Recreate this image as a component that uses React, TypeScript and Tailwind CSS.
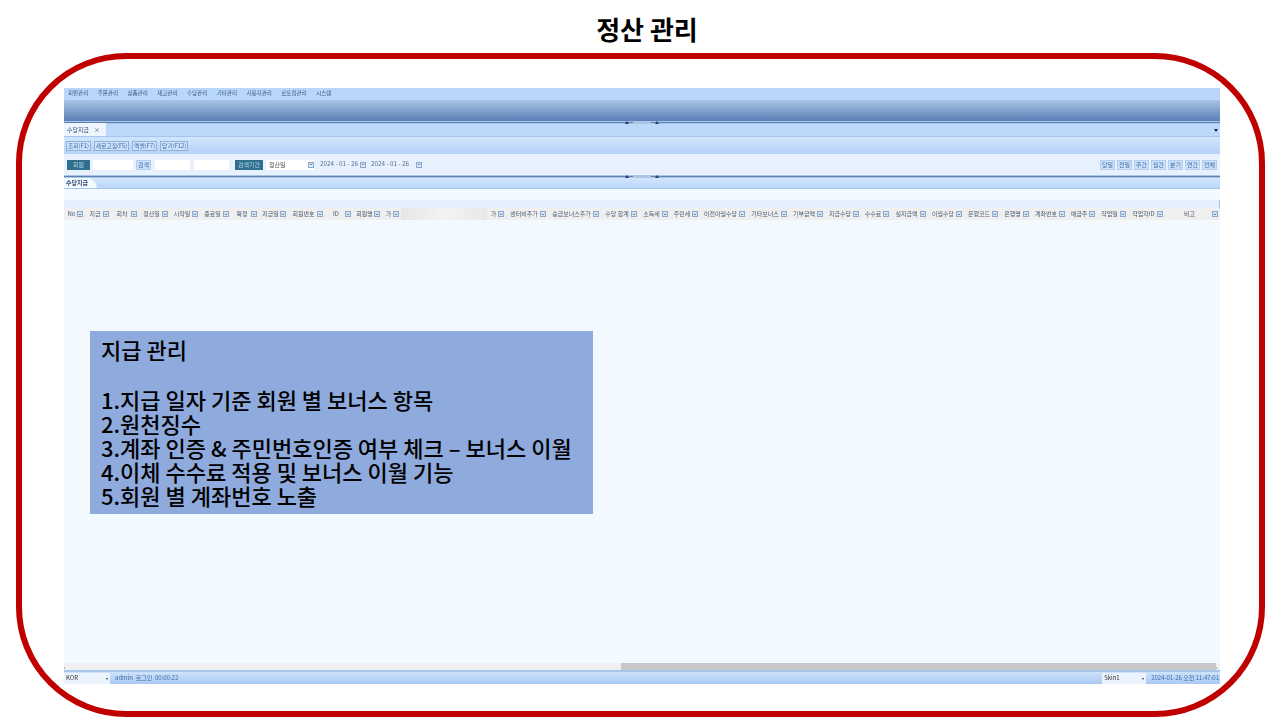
import React from "react";
import { ChevronDown } from "lucide-react";

const cols = [
  { label: "No", w: "w-[21px]" },
  { label: "지급", w: "w-[26px]" },
  { label: "회차", w: "w-[28px]" },
  { label: "정산일", w: "w-[31px]" },
  { label: "시작일", w: "w-[30px]" },
  { label: "종료일", w: "w-[31px]" },
  { label: "확정", w: "w-[28px]" },
  { label: "지급일", w: "w-[29px]" },
  { label: "회원번호", w: "w-[37px]" },
  { label: "ID", w: "w-[28px]" },
  { label: "회원명", w: "w-[29px]" },
  { label: "가", w: "w-[19px]" },
  { label: "", w: "w-[86px]" },
  { label: "가", w: "w-[19px]" },
  { label: "센터비추가", w: "w-[42px]" },
  { label: "승급보너스추가", w: "w-[53px]" },
  { label: "수당 합계", w: "w-[38px]" },
  { label: "소득세", w: "w-[31px]" },
  { label: "주민세", w: "w-[30px]" },
  { label: "이전이월수당", w: "w-[47px]" },
  { label: "기타보너스", w: "w-[42px]" },
  { label: "기부금액", w: "w-[36px]" },
  { label: "지급수당", w: "w-[36px]" },
  { label: "수수료", w: "w-[30px]" },
  { label: "실지급액", w: "w-[37px]" },
  { label: "이월수당", w: "w-[36px]" },
  { label: "은행코드", w: "w-[36px]" },
  { label: "은행명", w: "w-[31px]" },
  { label: "계좌번호", w: "w-[36px]" },
  { label: "예금주", w: "w-[30px]" },
  { label: "작업일", w: "w-[31px]" },
  { label: "작업자ID", w: "w-[37px]" },
  { label: "비고", w: "w-[55px]" },
];

const menus = ["회원관리", "주문관리", "상품관리", "재고관리", "수당관리", "기타관리", "사용자관리", "로또쉽관리", "시스템"];
const actions = ["조회(F1)", "새로고침(F5)", "엑셀(F7)", "닫기(F12)"];
const periods = ["당일", "전일", "주간", "월간", "분기", "연간", "전체"];
const notes = [
  "1.지급 일자 기준 회원 별 보너스 항목",
  "2.원천징수",
  "3.계좌 인증 & 주민번호인증 여부 체크 – 보너스 이월",
  "4.이체 수수료 적용 및 보너스 이월 기능",
  "5.회원 별 계좌번호 노출",
];

function Arrow() {
  return <span className="flex h-[6px] w-[6px] shrink-0 items-center justify-center border border-[#8aa9d0] bg-[#dbe8f8]"><ChevronDown size={5} strokeWidth={4} className="text-[#33507a]" /></span>;
}

function Splitter() {
  return (
    <div className="flex h-[3px] items-center justify-center bg-[#a9c6ea]">
      <div className="relative flex h-[3px] w-full items-center justify-center gap-[4px]">
        <span className="absolute inset-x-0 top-[1px] h-[1px] bg-[#5f7fae]" />
        <span className="relative h-0 w-0 border-x-[2px] border-b-[3px] border-x-transparent border-b-[#1f3f70]" />
        <span className="relative h-[1px] w-[18px] bg-[#b7c4d8]" />
        <span className="relative h-0 w-0 border-x-[2px] border-b-[3px] border-x-transparent border-b-[#1f3f70]" />
      </div>
    </div>
  );
}

export default function App() {
  return (
    <div className="h-[720px] w-[1280px] overflow-hidden bg-white font-['Noto_Sans_CJK_KR',sans-serif]">
      <h1 className="flex h-[53px] items-center justify-center pl-[14px] pt-[5px] text-[26px] font-bold leading-none text-black">정산 관리</h1>

      <div className="mx-[16px] h-[664px] w-[1249px] rounded-[110px] border-[6px] border-[#c00000] pl-[42px] pt-[29px]">
        <div className="flex h-[596px] w-[1156px] flex-col text-[6px] leading-none text-[#3a5680]">
          <div className="shrink-0 blur-[0.35px]">
            {/* 상단 메뉴 */}
            <div className="flex h-[12px] items-center gap-[9.5px] bg-[#b9d7fb] pl-[4px] text-[5.5px]">
              {menus.map((m) => <span key={m}>{m}</span>)}
            </div>
            <div className="h-[21px] bg-gradient-to-b from-[#a9c4e6] to-[#5a80b6]" />
            <Splitter />

            {/* 탭 */}
            <div className="flex h-[13px] items-end justify-between border-b border-[#a6c5ea] bg-[#bcd8fb] pr-[2px]">
              <div className="flex h-[13px] w-[42px] items-center justify-between bg-[#eef5fd] px-[3px] text-[#33507a]">
                <span>수당지급</span><span className="pr-[3px]">×</span>
              </div>
              <span className="mb-[4px] h-0 w-0 border-x-[2px] border-t-[3px] border-x-transparent border-t-[#10233f]" />
            </div>

            {/* 버튼 */}
            <div className="flex h-[17px] items-center gap-[3px] bg-gradient-to-b from-[#d3e5fd] to-[#b4d2f8] pl-[2px] text-[5.75px]">
              {actions.map((a) => (
                <span key={a} className="flex h-[10px] items-center border border-[#8fb0d8] bg-[#cfe2fb] px-[1px] text-[#3d6aa8]">{a}</span>
              ))}
            </div>

            {/* 검색 */}
            <div className="flex h-[21px] items-center justify-between bg-[#e8f1fe] pl-[3px] pr-[3px]">
              <div className="flex items-center">
                <span className="flex h-[10px] w-[23px] items-center justify-center bg-[#2f6f8f] text-[#b9d7ea]">회원</span>
                <span className="ml-[3px] h-[10px] w-[40px] bg-white" />
                <span className="ml-[3px] flex h-[10px] w-[15px] items-center justify-center border border-[#b3cdec] bg-[#cfe2fb] text-[#3d6aa8]">검색</span>
                <span className="ml-[4px] h-[10px] w-[35px] bg-white" />
                <span className="ml-[4px] h-[10px] w-[35px] bg-white" />
                <span className="ml-[6px] flex h-[10px] w-[28px] items-center justify-center bg-[#2f6f8f] text-[#b9d7ea]">검색기간</span>
                <span className="ml-[3px] flex h-[10px] w-[48px] items-center justify-between bg-white pl-[3px] text-[#444]">정산일<Arrow /></span>
                <span className="ml-[6px] w-[40px] text-[6.3px] text-[#55708f]">2024 - 01 - 26</span>
                <Arrow />
                <span className="ml-[5px] w-[45px] text-[6.3px] text-[#55708f]">2024 - 01 - 26</span>
                <Arrow />
              </div>
              <div className="flex gap-[2px]">
                {periods.map((p) => (
                  <span key={p} className="flex h-[10px] w-[15px] items-center justify-center border border-[#b3cdec] bg-[#cfe2fb] text-[#3d6aa8]">{p}</span>
                ))}
              </div>
            </div>
            <Splitter />

            {/* 하위 탭 */}
            <div className="flex h-[11px] border-b border-[#a6c5ea] bg-gradient-to-b from-[#d3e5fd] to-[#b9d6fa]">
              <span className="flex w-[33px] items-center rounded-tr-[10px] bg-[#f3faff] pl-[2px] font-bold text-[#33507a]">수당지급</span>
            </div>

            <div className="h-[11px] bg-[#f3faff]" />
            <div className="h-[8px] border-r border-[#a6c5ea] bg-[#e4f0fb]" />

            {/* 그리드 헤더 */}
            <div className="flex h-[12px] items-center bg-[#efefef] text-[#4a5a70]">
              {cols.map((c, i) => (
                c.label ? (
                  <div key={i} className={`flex shrink-0 items-center justify-between pl-[2px] pr-[2px] ${c.w}`}>
                    <span className="flex-1 whitespace-nowrap text-center">{c.label}</span>
                    <Arrow />
                  </div>
                ) : (
                  <div key={i} className={`h-[12px] shrink-0 bg-gradient-to-r from-[#e6e6e6] via-[#f3f3f3] to-[#e8e8e8] ${c.w}`} />
                )
              ))}
            </div>
          </div>

          {/* 본문 */}
          <div className="relative flex-1 bg-[#f3faff]">
            <div className="absolute left-[26px] top-[111px] h-[183px] w-[503px] bg-[#8faadc] pl-[11px] pt-[6px] text-[22px] font-medium leading-[24px] text-black">
              <p>지급 관리</p>
              <p className="mt-[26px]">{notes[0]}</p>
              {notes.slice(1).map((n) => <p key={n}>{n}</p>)}
            </div>
          </div>

          <div className="shrink-0 blur-[0.35px]">
            {/* 스크롤바 */}
            <div className="flex h-[7px] items-center bg-[#f0f0f0] text-[#333]">
              <span className="w-[4px] text-[5px]">‹</span>
              <div className="ml-[553px] h-[7px] flex-1 bg-[#c8c8c8]" />
              <span className="w-[4px] text-[5px]">›</span>
            </div>

            {/* 상태바 */}
            <div className="flex h-[14px] items-center justify-between border-t-[2px] border-[#a6c5ea] bg-gradient-to-b from-[#cfe2fb] to-[#a9c9f2] pr-[1px] text-[#3d6aa8]">
              <div className="flex items-center">
                <span className="flex h-[11px] w-[46px] items-center justify-between bg-[#eaf3fe] px-[2px] text-[#333]">KOR<span className="text-[4px]">▾</span></span>
                <span className="ml-[5px]">admin&nbsp; 로그인&nbsp; 00:00:22</span>
              </div>
              <div className="flex items-center">
                <span className="flex h-[11px] w-[44px] items-center justify-between bg-[#eaf3fe] px-[2px] text-[#333]">Skin1<span className="text-[4px]">▾</span></span>
                <span className="ml-[5px]">2024-01-26 오전 11:47:01</span>
              </div>
            </div>
          </div>
        </div>
      </div>
    </div>
  );
}
